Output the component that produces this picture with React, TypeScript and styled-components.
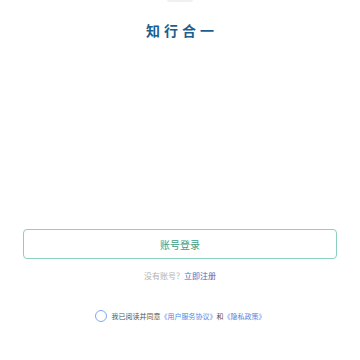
import styled, { createGlobalStyle } from "styled-components";

const GlobalStyle = createGlobalStyle`
  html, body {
    margin: 0;
    padding: 0;
    background: #ffffff;
  }
  body {
    font-family: "Noto Sans CJK SC", "Noto Sans", sans-serif;
  }
`;

const App = () => {
  return (
    <>
      <GlobalStyle />
      <Page>
        <Handle />
        <Title>知行合一</Title>
        <Actions>
          <LoginButton>账号登录</LoginButton>
          <Register>
            没有账号？<RegisterLink>立即注册</RegisterLink>
          </Register>
          <Agreement>
            <Radio />
            <AgreeText>
              我已阅读并同意<Link>《用户服务协议》</Link>和<Link>《隐私政策》</Link>
            </AgreeText>
          </Agreement>
        </Actions>
      </Page>
    </>
  );
};

export default App;

const Page = styled.div`
  width: 360px;
  height: 360px;
  display: flex;
  flex-direction: column;
  align-items: center;
  box-sizing: border-box;
  padding: 0 23px;
  overflow: hidden;
`;

const Handle = styled.div`
  width: 26px;
  height: 2px;
  border-radius: 0 0 2px 2px;
  background-color: #f0f0f0;
`;

const Title = styled.div`
  margin-top: 20px;
  font-size: 14px;
  line-height: 17px;
  font-weight: 700;
  letter-spacing: 4px;
  padding-left: 4px;
  color: #1d5e8e;
`;

const Actions = styled.div`
  width: 100%;
  margin-top: 190px;
  display: flex;
  flex-direction: column;
  align-items: center;
`;

const LoginButton = styled.div`
  width: 100%;
  height: 30px;
  box-sizing: border-box;
  border: 1px solid #8ccfbf;
  border-radius: 4px;
  display: flex;
  align-items: center;
  justify-content: center;
  font-size: 10px;
  color: #3a9e85;
`;

const Register = styled.div`
  margin-top: 11px;
  font-size: 8px;
  line-height: 12px;
  color: #b3b3b3;
`;

const RegisterLink = styled.span`
  color: #3c6ec2;
`;

const Agreement = styled.div`
  margin-top: 28px;
  display: flex;
  align-items: center;
  gap: 5px;
`;

const Radio = styled.div`
  width: 12px;
  height: 12px;
  box-sizing: border-box;
  border: 1px solid #7ea9f3;
  border-radius: 50%;
`;

const AgreeText = styled.div`
  font-size: 7px;
  line-height: 10px;
  color: #555555;
`;

const Link = styled.span`
  color: #4f86df;
`;
